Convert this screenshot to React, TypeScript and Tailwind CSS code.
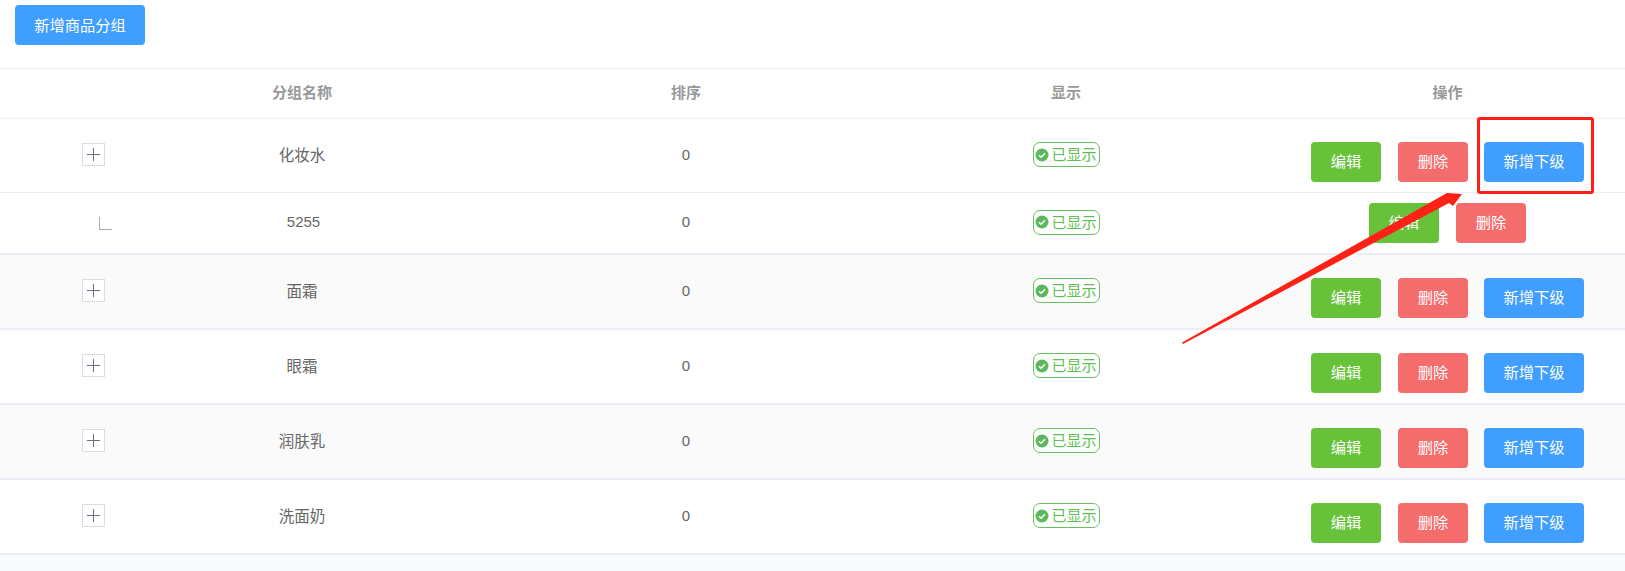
import React from "react";

const font = { fontFamily: '"Liberation Sans", "Noto Sans CJK SC", sans-serif' };

function Tag() {
  return (
    <span className="inline-flex h-[25px] w-[67px] items-center justify-center rounded-[7px] border border-[#67c05f] bg-white text-[15px] leading-none text-[#5fbf55]">
      <svg viewBox="0 0 14 14" className="mr-[2px] h-[14px] w-[14px] shrink-0">
        <circle cx="7" cy="7" r="6.5" fill="#5cb85c" />
        <path d="M4 7.2l2.1 2.1L10 5.2" fill="none" stroke="#fff" strokeWidth="1.5" />
      </svg>
      已显示
    </span>
  );
}

function Btn({ color, w, children }: { color: string; w: string; children: React.ReactNode }) {
  return (
    <button className={`h-10 ${w} ${color} rounded-[4px] text-[15.25px] leading-none text-white`}>{children}</button>
  );
}

const green = "bg-[#67c23a]";
const red = "bg-[#f56c6c]";
const blue = "bg-[#409eff]";

type RowProps = { name: string; child?: boolean; alt?: boolean; heavy?: boolean; h: string; btnOffset: string };

function Row({ name, child, alt, heavy, h, btnOffset }: RowProps) {
  return (
    <div
      className={`grid grid-cols-[188px_228px_540px_220px_449px] items-center pb-[2px] ${h} ${alt ? "bg-[#fafafa]" : "bg-white"} ${
        heavy ? "border-b-2 border-[#ebeef5]" : "border-b border-[#ebeef5]"
      }`}
    >
      <div className="flex pl-[82px]">
        {child ? (
          <span className="ml-[17px] mt-[3px] h-[13px] w-[13px] border-b border-l border-[#aaaaaa]" />
        ) : (
          <span className="flex h-[23px] w-[23px] items-center justify-center border border-[#dddddd] bg-white">
            <svg viewBox="0 0 13 13" className="h-[13px] w-[13px]">
              <path d="M6.5 0v13M0 6.5h13" stroke="#67707f" strokeWidth="1" />
            </svg>
          </span>
        )}
      </div>
      <div className={`text-center text-[#666666] ${child ? "pl-[3px] text-[15px]" : "mt-[2px] text-[15.5px]"}`}>{name}</div>
      <div className={`text-center text-[15px] text-[#666666] ${child ? "" : "mt-[2px]"}`}>0</div>
      <div className="flex justify-center">
        <Tag />
      </div>
      <div className={`flex justify-center gap-[17px] pl-[94px] ${btnOffset}`}>
        <Btn color={green} w="w-[70px]">编辑</Btn>
        <Btn color={red} w="w-[70px]">删除</Btn>
        {!child && (
          <span className="-ml-px">
            <Btn color={blue} w="w-[100px]">新增下级</Btn>
          </span>
        )}
      </div>
    </div>
  );
}

export default function App() {
  return (
    <div className="relative h-[571px] w-[1625px] overflow-hidden bg-[#f9fafb]" style={font}>
      <div className="h-[68px] bg-white pl-[15px] pt-[5px]">
        <button className={`h-10 w-[130px] rounded-[4px] ${blue} pt-px text-[15.25px] leading-none text-white`}>新增商品分组</button>
      </div>
      <div className="grid h-[51px] grid-cols-[188px_228px_540px_220px_449px] items-center border-y border-[#ebeef5] bg-white text-center text-[15px] font-bold text-[#999999]">
        <div />
        <div>分组名称</div>
        <div>排序</div>
        <div>显示</div>
        <div className="pl-[94px]">操作</div>
      </div>
      <Row name="化妆水" h="h-[74px]" btnOffset="mt-[14px]" />
      <Row name="5255" child heavy h="h-[62px]" btnOffset="mt-[2px]" />
      <Row name="面霜" alt heavy h="h-[75px]" btnOffset="mt-[14px]" />
      <Row name="眼霜" heavy h="h-[75px]" btnOffset="mt-[14px]" />
      <Row name="润肤乳" alt heavy h="h-[75px]" btnOffset="mt-[14px]" />
      <Row name="洗面奶" heavy h="h-[75px]" btnOffset="mt-[14px]" />

      <div className="absolute left-[1477px] top-[117px] h-[77px] w-[117px] rounded-[3px] border-[3px] border-[#ff1f14]" />
      <svg className="absolute left-0 top-0 h-[571px] w-[1625px]" viewBox="0 0 1625 571">
        <polygon points="1182,342.5 1447,193 1462,194 1453,206 1449,203 1400,229 1183,344" fill="#ff2115" />
      </svg>
    </div>
  );
}
